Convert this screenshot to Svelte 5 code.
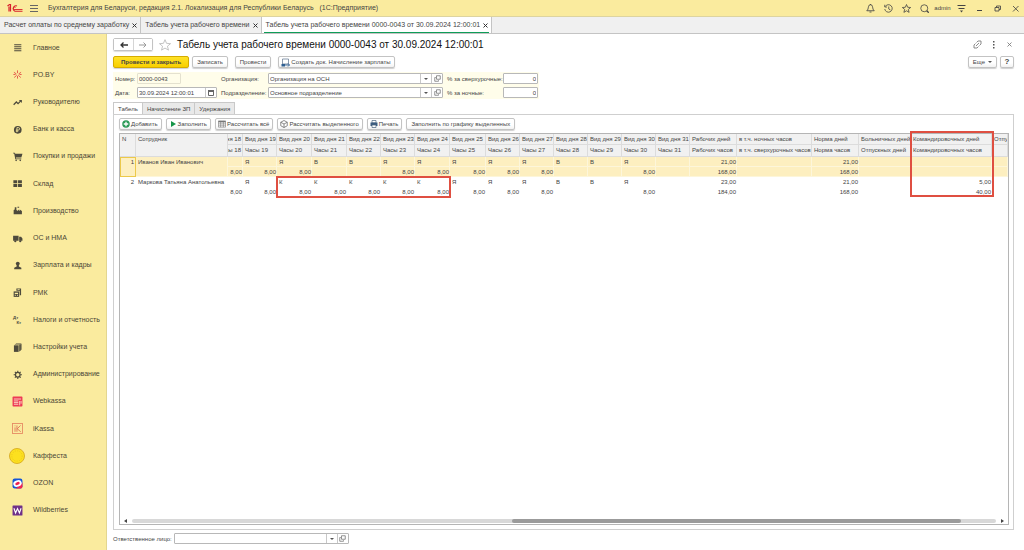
<script>
	const sections = [
		{ name: 'Главное', icon: 'main' },
		{ name: 'PO.BY', icon: 'poby' },
		{ name: 'Руководителю', icon: 'trend' },
		{ name: 'Банк и касса', icon: 'bank' },
		{ name: 'Покупки и продажи', icon: 'cart' },
		{ name: 'Склад', icon: 'stock' },
		{ name: 'Производство', icon: 'factory' },
		{ name: 'ОС и НМА', icon: 'truck' },
		{ name: 'Зарплата и кадры', icon: 'person' },
		{ name: 'РМК', icon: 'rmk' },
		{ name: 'Налоги и отчетность', icon: 'tax' },
		{ name: 'Настройки учета', icon: 'books' },
		{ name: 'Администрирование', icon: 'gear' },
		{ name: 'Webkassa', icon: 'webkassa' },
		{ name: 'iKassa', icon: 'ikassa' },
		{ name: 'Каффеста', icon: 'kaffesta' },
		{ name: 'OZON', icon: 'ozon' },
		{ name: 'Wildberries', icon: 'wb' }
	];

	const windows = [
		'Расчет оплаты по среднему заработку',
		'Табель учета рабочего времени',
		'Табель учета рабочего времени 0000-0043 от 30.09.2024 12:00:01'
	];
	let activeWindow = $state(2);

	const pages = ['Табель', 'Начисление ЗП', 'Удержания'];
	let activePage = $state(0);

	let number = $state('0000-0043');
	let date = $state('30.09.2024 12:00:01');
	let organization = $state('Организация на ОСН');
	let department = $state('Основное подразделение');
	let overtime = $state('0');
	let night = $state('0');
	let responsible = $state('');

	const days = [19, 20, 21, 22, 23, 24, 25, 26, 27, 28, 29, 30, 31];
	const dayWidths = [34, 35, 35, 34, 34, 35, 36, 34, 34, 34, 34, 34, 34];

	const totals = [
		{ top: 'Рабочих дней', bottom: 'Рабочих часов', width: 47 },
		{ top: 'в т.ч. ночных часов', bottom: 'в т.ч. сверхурочных часов', width: 75 },
		{ top: 'Норма дней', bottom: 'Норма часов', width: 47 },
		{ top: 'Больничных дней', bottom: 'Отпускных дней', width: 52 },
		{ top: 'Командировочных дней', bottom: 'Командировочных часов', width: 81 }
	];

	const employees = [
		{
			name: 'Иванов Иван Иванович',
			kinds: ['Я', 'Я', 'В', 'В', 'Я', 'Я', 'Я', 'Я', 'Я', 'В', 'В', 'Я', ''],
			hours: ['8,00', '8,00', '', '', '8,00', '8,00', '8,00', '8,00', '8,00', '', '', '8,00', ''],
			totalDays: ['21,00', '', '21,00', '', ''],
			totalHours: ['168,00', '', '168,00', '', '']
		},
		{
			name: 'Маркова Татьяна Анатольевна',
			kinds: ['Я', 'К', 'К', 'К', 'К', 'К', 'Я', 'Я', 'Я', 'В', 'В', 'Я', ''],
			hours: ['8,00', '8,00', '8,00', '8,00', '8,00', '8,00', '8,00', '8,00', '8,00', '', '', '8,00', ''],
			totalDays: ['23,00', '', '21,00', '', '5,00'],
			totalHours: ['184,00', '', '168,00', '', '40,00']
		}
	];
	let selectedRow = $state(0);
</script>

{#snippet openIcon()}
	<svg width="7" height="7" viewBox="0 0 14 14" fill="none" stroke="#666" stroke-width="1.400">
		<path d="M5 1.500h7.500v7H5z" />
		<path d="M3.500 5H1.500v7.500h7.500v-2" />
	</svg>
{/snippet}

{#snippet combo(label)}
	<button class="field-btn" type="button" aria-label="{label}: выбрать из списка">
		<svg width="4" height="2" viewBox="0 0 4 2"><path d="M0 0h4L2 2z" fill="#555" /></svg>
	</button>
	<button class="field-btn" type="button" aria-label="{label}: открыть">{@render openIcon()}</button>
{/snippet}

{#snippet sectionIcon(icon)}
	<svg class="section-icon" viewBox="0 0 20 20" fill="#4d4a3c">
		{#if icon === 'main'}
			<path d="M4 4h13v1.800H4zM4 7.600h13v1.800H4zM4 11.200h13v1.800H4zM4 14.800h13v1.800H4z" />
		{:else if icon === 'poby'}
			<g stroke="#e0413e" stroke-width="1.500" fill="none">
				<path d="M10 2.500v5M10 12.500v5M3.500 6l4.500 3M16.500 6L12 9M4 15.500l4.500-4M16 15.500l-4.500-4M2.500 10h4M13.500 10h4" />
			</g>
		{:else if icon === 'trend'}
			<path d="M3 14l5-5 3 3 5-5" fill="none" stroke="#4d4a3c" stroke-width="2.200" />
			<path d="M12.500 5.500H18V11z" />
		{:else if icon === 'bank'}
			<circle cx="10.500" cy="10.500" r="7" />
			<path d="M9 15V6.500h2.500a2.200 2.200 0 0 1 0 4.500H7M7 13h4.500" fill="none" stroke="#faeb9e" stroke-width="1.500" />
		{:else if icon === 'cart'}
			<path d="M2 3h3l1 2h13l-2 7H7l.5 1.500H17V15H6L4 4.500H2z" />
			<circle cx="7.500" cy="17" r="1.500" />
			<circle cx="15" cy="17" r="1.500" />
		{:else if icon === 'stock'}
			<path d="M2.500 4h7v5.500h-7zM11 4h7v5.500h-7zM2.500 11h7v5.500h-7zM11 11h7v5.500h-7z" />
		{:else if icon === 'factory'}
			<path d="M3 17V9l2-1V4h3v5l3 2V8l3 3V8l4 3v6zM10 3h3v2h-3z" />
		{:else if icon === 'truck'}
			<path d="M2 5h10v9H2zM13 7h3.500L19 10v4h-6z" />
			<circle cx="6" cy="15" r="2" />
			<circle cx="15" cy="15" r="2" />
		{:else if icon === 'person'}
			<circle cx="10.500" cy="6.500" r="3.500" />
			<path d="M8.500 9h4v3l4.500 2v3H4v-3l4.500-2z" />
		{:else if icon === 'rmk'}
			<path d="M3 8h10v10H3z" />
			<path d="M8 2.500h8.500V15H14V7H8z" />
			<path d="M5 10.500h6v2H5zM5 14h2v2H5zM9 14h2v2H9zM10 4h4v1.500h-4z" fill="#faeb9e" />
		{:else if icon === 'tax'}
			<text x="2" y="9" font-size="8" font-weight="700">Дт</text>
			<text x="8" y="18" font-size="8" font-weight="700">Кт</text>
		{:else if icon === 'books'}
			<path d="M3.500 6h8.500v12H3.500z" />
			<path d="M7 2.500h10V14h-1.200V3.700H7zM5.200 4.200h10v12H14v-11H5.200z" />
			<path d="M12.500 6v12l4.500-4V3.500z" opacity="0.700" />
		{:else if icon === 'gear'}
			<circle cx="10.500" cy="10.500" r="4.200" fill="none" stroke="#4d4a3c" stroke-width="2.200" />
			<path
				d="M10.500 3v3M10.500 15v3M3 10.500h3M15 10.500h3M5.200 5.200l2 2M13.800 13.800l2 2M15.800 5.200l-2 2M7.200 13.800l-2 2"
				stroke="#4d4a3c"
				stroke-width="2"
			/>
		{:else if icon === 'webkassa'}
			<rect x="1" y="1" width="18" height="18" rx="1.500" fill="#ee3a55" />
			<path d="M3.500 5.500h13M3.500 9h8M3.500 12h8M3.500 15h8M14 9v8M16.500 9v5" stroke="#fde3c8" stroke-width="1.600" />
		{:else if icon === 'ikassa'}
			<rect x="1" y="1" width="18" height="18" fill="none" stroke="#e58a62" stroke-width="1.600" />
			<path d="M5.500 8v8M5.500 4.500v1.500M9 4.500V16M15.500 4.500L9.500 10.500L16 16" fill="none" stroke="#dd6b50" stroke-width="1.500" />
		{:else if icon === 'kaffesta'}
			<circle cx="10" cy="10" r="9.400" fill="#fce01f" stroke="#d3a51c" stroke-width="1" />
			<circle cx="10" cy="10" r="6.500" fill="none" stroke="#e8bf1c" stroke-width="0.800" stroke-dasharray="1.500 1.500" />
		{:else if icon === 'ozon'}
			<rect x="1" y="1" width="18" height="18" rx="4" fill="#1456d8" />
			<path d="M19 8v8a3 3 0 0 1-3 3H7z" fill="#f3224f" />
			<ellipse cx="10" cy="10" rx="7.800" ry="5.800" transform="rotate(-20 10 10)" fill="#fff" />
			<ellipse cx="10" cy="10" rx="4.200" ry="2.600" transform="rotate(-20 10 10)" fill="#ef1f4d" />
		{:else if icon === 'wb'}
			<rect x="1" y="1" width="18" height="18" rx="1" fill="#6f3089" />
			<path d="M3.500 6l3 8.500L10 6.500l3.500 8L16.500 6" fill="none" stroke="#fff" stroke-width="2" />
		{/if}
	</svg>
{/snippet}

<div class="app">
	<header class="titlebar">
		<svg class="logo" width="16" height="10" viewBox="0 0 32 20" fill="none" stroke="#d8202c">
			<path d="M1 6l4-3h2v14M4 7v10" stroke-width="2.400" />
			<path d="M20 6a5.500 5.500 0 1 0-4 10.500h15" stroke-width="2.200" />
			<path d="M17 9a2.500 2.500 0 1 0-1 4h15" stroke-width="1.800" />
		</svg>
		<button class="icon-btn burger" type="button" aria-label="Меню">
			<svg width="8" height="8" viewBox="0 0 8 8" stroke="#666"><path d="M0 1.500h8M0 4.500h8M0 7.500h8" /></svg>
		</button>
		<span class="app-title">Бухгалтерия для Беларуси, редакция 2.1. Локализация для Республики Беларусь &nbsp; (1С:Предприятие)</span>
		<div class="system">
			<button class="icon-btn" type="button" aria-label="Уведомления">
				<svg width="9" height="9" viewBox="0 0 18 18" fill="none" stroke="#444" stroke-width="1.700">
					<path d="M1.500 13.500c3-2 2.500-5 3.500-8a4 4 0 0 1 8 0c1 3 .5 6 3.500 8zM7 16h4M9 0v2" />
				</svg>
			</button>
			<button class="icon-btn" type="button" aria-label="История">
				<svg width="9" height="9" viewBox="0 0 18 18" fill="none" stroke="#444" stroke-width="1.600">
					<path d="M2.500 5a7.500 7.500 0 1 1-1 5M1.500 1.500V6H6M9.500 5v5l3.500 2" />
				</svg>
			</button>
			<button class="icon-btn" type="button" aria-label="Избранное">
				<svg width="9" height="9" viewBox="0 0 18 18" fill="none" stroke="#444" stroke-width="1.600">
					<path d="M9 1l2.300 5.500 6 .5-4.600 3.800 1.500 5.900L9 13.600l-5.200 3.100 1.500-5.900L.7 7l6-.5z" />
				</svg>
			</button>
			<button class="icon-btn" type="button" aria-label="Поиск">
				<svg width="9" height="9" viewBox="0 0 18 18" fill="none" stroke="#444" stroke-width="1.600">
					<circle cx="8.500" cy="8.500" r="7" />
					<path d="M13.500 13.500l4 4" stroke-width="2.500" />
				</svg>
			</button>
			<span class="user">admin</span>
			<button class="icon-btn" type="button" aria-label="Настройки">
				<svg width="9" height="9" viewBox="0 0 18 18" fill="#444">
					<path d="M1 2h16v1.800H1zM3 8h12v1.800H3zM6 13h6l-3 4z" />
				</svg>
			</button>
			<button class="icon-btn" type="button" aria-label="Свернуть">
				<svg width="9" height="9" viewBox="0 0 18 18"><path d="M4 13h10" stroke="#444" stroke-width="2" /></svg>
			</button>
			<button class="icon-btn" type="button" aria-label="Развернуть">
				<svg width="9" height="9" viewBox="0 0 18 18" fill="none" stroke="#444" stroke-width="1.700">
					<path d="M4 7h8v7H4zM7 7V4h8v7h-3" />
				</svg>
			</button>
			<button class="icon-btn" type="button" aria-label="Закрыть программу">
				<svg width="9" height="9" viewBox="0 0 18 18"><path d="M4 4l11 11M15 4L4 15" stroke="#444" stroke-width="1.700" /></svg>
			</button>
		</div>
	</header>

	<div class="windows">
		{#each windows as title, i}
			<div class="window-tab" class:active={activeWindow === i}>
				<button class="window-name" type="button" onclick={() => (activeWindow = i)}>{title}</button>
				<button class="window-close" type="button" aria-label="Закрыть {title}">
					<svg width="5" height="5" viewBox="0 0 5 5"><path d="M.5.5l4 4M4.500.5l-4 4" stroke="#333" /></svg>
				</button>
			</div>
		{/each}
	</div>

	<nav class="sections">
		{#each sections as section}
			<a class="section" href="#{section.icon}">
				<span class="icon-slot" class:coin={section.icon === 'kaffesta'}>
					{@render sectionIcon(section.icon)}
				</span>
				{section.name}
			</a>
		{/each}
	</nav>

	<main class="form">
		<div class="form-head">
			<div class="history">
				<button type="button" aria-label="Назад">
					<svg width="8" height="6" viewBox="0 0 8 6" fill="none" stroke="#333" stroke-width="1.300"><path d="M8 3H1M3.500.5L1 3l2.500 2.500" /></svg>
				</button>
				<button type="button" aria-label="Вперед">
					<svg width="8" height="6" viewBox="0 0 8 6" fill="none" stroke="#999"><path d="M0 3h7M4.500.5L7 3 4.500 5.500" /></svg>
				</button>
			</div>
			<button class="icon-btn star" type="button" aria-label="В избранное">
				<svg width="12" height="12" viewBox="0 0 18 18" fill="none" stroke="#b5b5b5" stroke-width="1.200">
					<path d="M9 1l2.300 5.500 6 .5-4.600 3.800 1.500 5.900L9 13.600l-5.200 3.100 1.500-5.900L.7 7l6-.5z" />
				</svg>
			</button>
			<h1>Табель учета рабочего времени 0000-0043 от 30.09.2024 12:00:01</h1>
			<div class="form-tools">
				<button class="icon-btn" type="button" aria-label="Получить ссылку">
					<svg width="9" height="9" viewBox="0 0 18 18" fill="none" stroke="#777" stroke-width="1.700">
						<path d="M7 5l3-3h6v6l-3 3M11 13l-3 3H2v-6l3-3M6 12l6-6" />
					</svg>
				</button>
				<button class="icon-btn" type="button" aria-label="Дополнительно">
					<svg width="9" height="9" viewBox="0 0 18 18" fill="#555"><path d="M8 2h3v3H8zM8 8h3v3H8zM8 14h3v3H8z" /></svg>
				</button>
				<button class="icon-btn" type="button" aria-label="Закрыть форму">
					<svg width="9" height="9" viewBox="0 0 18 18"><path d="M5 5l8 8M13 5l-8 8" stroke="#777" stroke-width="1.700" /></svg>
				</button>
			</div>
		</div>

		<div class="commands">
			<button class="btn primary" type="button">Провести и закрыть</button>
			<button class="btn" type="button">Записать</button>
			<button class="btn spaced" type="button">Провести</button>
			<button class="btn spaced with-icon" type="button">
				<svg width="9" height="9" viewBox="0 0 18 18" fill="none">
					<path d="M3 2h12v10H3z" fill="#fff" stroke="#6d8299" stroke-width="1.600" />
					<path d="M1 12h7v5H1z" fill="#2e5f91" />
					<path d="M8 14h9M14 11l3 3-3 3" stroke="#2e5f91" stroke-width="1.800" />
				</svg>
				Создать док. Начисление зарплаты
			</button>
			<button class="btn more" type="button">
				Еще
				<svg width="4" height="2" viewBox="0 0 4 2"><path d="M0 0h4L2 2z" fill="#555" /></svg>
			</button>
			<button class="btn help" type="button" aria-label="Справка">?</button>
		</div>

		<div class="fields">
			<label for="number">Номер:</label>
			<div class="field number"><input id="number" bind:value={number} /></div>
			<label for="organization">Организация:</label>
			<div class="field">
				<input id="organization" bind:value={organization} />
				{@render combo('Организация')}
			</div>
			<label for="overtime">% за сверхурочные:</label>
			<div class="field amount"><input id="overtime" bind:value={overtime} /></div>

			<label for="date">Дата:</label>
			<div class="field">
				<input id="date" bind:value={date} />
				<button class="field-btn" type="button" aria-label="Календарь">
					<svg width="6" height="6" viewBox="0 0 6 6"><path d="M.5 1h5v4.500h-5z" fill="none" stroke="#666" /><path d="M0 0h6v2H0z" fill="#666" /></svg>
				</button>
			</div>
			<label for="department">Подразделение:</label>
			<div class="field">
				<input id="department" bind:value={department} />
				{@render combo('Подразделение')}
			</div>
			<label for="night">% за ночные:</label>
			<div class="field amount"><input id="night" bind:value={night} /></div>
		</div>

		<div class="pages">
			{#each pages as page, i}
				<button class="page-tab" class:active={activePage === i} type="button" onclick={() => (activePage = i)}>{page}</button>
			{/each}
		</div>

		<section class="page">
			<div class="toolbar">
				<button class="btn with-icon" type="button">
					<svg width="8" height="8" viewBox="0 0 16 16"><circle cx="8" cy="8" r="7.500" fill="#2b9a57" /><path d="M8 3.500v9M3.500 8h9" stroke="#fff" stroke-width="2.600" /></svg>
					Добавить
				</button>
				<button class="btn with-icon" type="button">
					<svg width="8" height="8" viewBox="0 0 8 8"><path d="M2 1l5 3-5 3z" fill="#159447" /></svg>
					Заполнить
				</button>
				<button class="btn with-icon" type="button">
					<svg width="8" height="8" viewBox="0 0 18 18" fill="none" stroke="#777" stroke-width="1.400">
						<path d="M1 2h16v14H1zM1 7h16M1 11.500h16M6 2v14M12 2v14" />
						<path d="M1 3.500h16" stroke-width="2.500" />
					</svg>
					Рассчитать всё
				</button>
				<button class="btn with-icon" type="button">
					<svg width="8" height="8" viewBox="0 0 16 16" fill="none" stroke="#666" stroke-width="1.500">
						<path d="M8 1l6.500 3.500v7L8 15l-6.500-3.500v-7zM1.500 4.500L8 8l6.500-3.500M8 8v7" />
					</svg>
					Рассчитать выделенного
				</button>
				<button class="btn with-icon" type="button">
					<svg width="8" height="8" viewBox="0 0 16 16">
						<path d="M4 1h8v5H4z" fill="#fff" stroke="#4b6480" stroke-width="1.400" />
						<path d="M1 5h14v7H1z" fill="#3c5c80" />
						<path d="M4 10h8v5H4z" fill="#fff" stroke="#4b6480" stroke-width="1.400" />
					</svg>
					Печать
				</button>
				<button class="btn" type="button">Заполнить по графику выделенных</button>
			</div>

			<div class="grid">
				<table>
					<colgroup>
						<col class="col-n" />
						<col class="col-name" />
						<col class="col-cut" />
						{#each dayWidths as width}
							<col style:width="{width}px" />
						{/each}
						{#each totals as total}
							<col style:width="{total.width}px" />
						{/each}
						<col />
					</colgroup>
					<thead>
						<tr>
							<th rowspan="2">N</th>
							<th rowspan="2">Сотрудник</th>
							<th class="cut"><div>Вид дня 18</div></th>
							{#each days as day}
								<th>Вид дня {day}</th>
							{/each}
							{#each totals as total}
								<th>{total.top}</th>
							{/each}
							<th>Отпускных часов</th>
						</tr>
						<tr>
							<th class="cut"><div>Часы 18</div></th>
							{#each days as day}
								<th>Часы {day}</th>
							{/each}
							{#each totals as total}
								<th>{total.bottom}</th>
							{/each}
							<th></th>
						</tr>
					</thead>
					{#each employees as employee, i}
						<tbody class:selected={selectedRow === i} onclick={() => (selectedRow = i)}>
							<tr>
								<td class="num index" rowspan="2">{i + 1}</td>
								<td class="name" rowspan="2">{employee.name}</td>
								<td></td>
								{#each employee.kinds as kind}
									<td>{kind}</td>
								{/each}
								{#each employee.totalDays as value}
									<td class="num">{value}</td>
								{/each}
								<td></td>
							</tr>
							<tr>
								<td class="num">8,00</td>
								{#each employee.hours as value}
									<td class="num">{value}</td>
								{/each}
								{#each employee.totalHours as value}
									<td class="num">{value}</td>
								{/each}
								<td></td>
							</tr>
						</tbody>
					{/each}
				</table>
				<div class="mark mark-days"></div>
				<div class="mark mark-trips"></div>
				<div class="scroll">
					<svg width="3" height="4" viewBox="0 0 3 4"><path d="M3 0v4L0 2z" fill="#444" /></svg>
					<div class="track"><div class="thumb"></div></div>
					<svg width="3" height="4" viewBox="0 0 3 4"><path d="M0 0v4l3-2z" fill="#444" /></svg>
				</div>
			</div>
		</section>

		<div class="footer">
			<label for="responsible">Ответственное лицо:</label>
			<div class="field">
				<input id="responsible" bind:value={responsible} />
				{@render combo('Ответственное лицо')}
			</div>
		</div>
	</main>
</div>

<style>
	:global(body) {
		background: #fff;
	}

	.app {
		display: grid;
		grid-template-columns: 107px minmax(0, 1fr);
		grid-template-rows: 17px 17px minmax(0, 1fr);
		min-height: 100vh;
		font-family: 'Liberation Sans', Arial, sans-serif;
		font-size: 7px;
		line-height: 10px;
		color: #444;
	}

	.app * {
		box-sizing: border-box;
	}

	button,
	input {
		font: inherit;
		color: inherit;
		margin: 0;
		padding: 0;
	}

	button {
		white-space: nowrap;
		cursor: pointer;
	}

	svg {
		display: block;
		flex: none;
	}

	.icon-btn {
		display: flex;
		align-items: center;
		justify-content: center;
		border: 0;
		background: none;
	}

	/* title bar */
	.titlebar {
		grid-column: 1 / -1;
		display: flex;
		align-items: center;
		padding: 0 0 0 7px;
		background: #faeb9e;
		border-bottom: 1px solid #ddd4a0;
	}

	.burger {
		margin: 0 10px 0 7px;
	}

	.app-title {
		white-space: nowrap;
	}

	.system {
		display: flex;
		align-items: center;
		margin-left: auto;
	}

	.system .icon-btn {
		width: 18px;
		height: 14px;
	}

	.user {
		width: 19px;
		font-size: 6px;
		text-align: center;
	}

	/* open windows */
	.windows {
		grid-column: 1 / -1;
		display: flex;
		background: #f0f0f0;
		border-bottom: 1px solid #c4c4c4;
	}

	.window-tab {
		display: flex;
		align-items: center;
		gap: 3px;
		padding: 0 3px 0 4px;
		border-right: 1px solid #c4c4c4;
	}

	.window-tab.active {
		background: linear-gradient(#0f9d58, #0f9d58) 2px 100% / calc(100% - 4px) 1px no-repeat #fff;
	}

	.window-name,
	.window-close {
		border: 0;
		background: none;
	}

	/* sections panel */
	.sections {
		display: flex;
		flex-direction: column;
		padding-bottom: 26px;
		background: #faeb9e;
		border-right: 1px solid #e3d68f;
	}

	.section {
		flex: 1;
		display: flex;
		align-items: center;
		gap: 8px;
		padding-left: 9px;
		color: #4a4636;
		text-decoration: none;
		white-space: nowrap;
	}

	.icon-slot {
		display: flex;
		justify-content: center;
		width: 16px;
	}

	.section-icon {
		width: 11px;
		height: 11px;
	}

	.coin .section-icon {
		width: 16px;
		height: 16px;
	}

	/* form */
	.form {
		display: flex;
		flex-direction: column;
		min-width: 0;
		padding: 4px 10px 6px 6px;
	}

	.form-head {
		display: flex;
		align-items: center;
		height: 13px;
	}

	.history {
		display: flex;
		height: 13px;
		border: 1px solid #c3c3c3;
		border-radius: 2px;
		box-shadow: 0 1px 1px #ddd;
	}

	.history button {
		display: flex;
		align-items: center;
		justify-content: center;
		width: 19px;
		border: 0;
		background: #fff;
	}

	.history button + button {
		border-left: 1px solid #d5d5d5;
	}

	.star {
		margin: 0 6px;
	}

	h1 {
		margin: 0;
		font-size: 10px;
		font-weight: 400;
		line-height: 13px;
		color: #111;
		white-space: nowrap;
	}

	.form-tools {
		display: flex;
		gap: 7px;
		margin-left: auto;
	}

	.btn {
		display: flex;
		align-items: center;
		justify-content: center;
		gap: 1px;
		height: 12px;
		padding: 0 4px;
		border: 1px solid #c3c3c3;
		border-radius: 2px;
		background: linear-gradient(#fff 60%, #f2f2f2);
		box-shadow: 0 1px 1px #d0d0d0;
		font-size: 6px;
	}

	.btn.with-icon {
		padding: 0 3px 0 2px;
	}

	.commands {
		display: flex;
		gap: 3px;
		margin-top: 5px;
	}

	.btn.primary {
		padding: 0 7px;
		border-color: #d5ac00;
		background: linear-gradient(#ffe227, #f8cf00);
		font-weight: 700;
	}

	.btn.spaced {
		margin-left: 4px;
	}

	.btn.more {
		margin-left: auto;
		gap: 3px;
	}

	.btn.help {
		width: 14px;
		font-size: 8px;
		font-weight: 700;
	}

	.fields {
		align-self: flex-start;
		display: grid;
		grid-template-columns: 22px 80px 51px 175px 60px 35px;
		grid-auto-rows: 11px;
		row-gap: 3px;
		align-items: center;
		margin-top: 4px;
		padding: 1px 1px 1px 2px;
		background: #fffdea;
		font-size: 6px;
	}

	.fields label {
		white-space: nowrap;
	}

	.fields label:nth-of-type(3n + 2),
	.fields label:nth-of-type(3n) {
		padding-left: 4px;
	}

	.field {
		display: flex;
		height: 11px;
		border: 1px solid #b8b8b8;
		border-radius: 1px;
		background: #fff;
	}

	.field input {
		flex: 1;
		min-width: 0;
		width: 100%;
		padding: 0 1px;
		border: 0;
		background: none;
		outline: none;
	}

	.field.number {
		width: 44px;
		border-color: #e4e1cf;
		background: none;
	}

	.field.amount input {
		text-align: right;
	}

	.field-btn {
		display: flex;
		align-items: center;
		justify-content: center;
		width: 11px;
		border: 0;
		border-left: 1px solid #c8c8c8;
		background: none;
	}

	/* form pages */
	.pages {
		display: flex;
		margin-top: 3px;
	}

	.page-tab {
		height: 12px;
		padding: 0 4px;
		border: 1px solid #c9c9c9;
		border-left-width: 0;
		border-bottom-width: 0;
		background: #e9e9e9;
		font-size: 6px;
	}

	.page-tab:first-child {
		border-left-width: 1px;
	}

	.page-tab.active {
		background: #fff;
	}

	.page {
		flex: 1;
		display: flex;
		flex-direction: column;
		gap: 3px;
		padding: 3px 4px 4px 5px;
		border: 1px solid #cfcfcf;
	}

	.toolbar {
		display: flex;
		gap: 4px;
	}

	/* timesheet */
	.grid {
		position: relative;
		flex: 1;
		display: flex;
		flex-direction: column;
		border: 1px solid #b5b5b5;
	}

	table {
		width: 100%;
		table-layout: fixed;
		border-collapse: separate;
		border-spacing: 0;
		font-size: 6px;
		line-height: 10px;
	}

	.col-n {
		width: 16px;
	}

	.col-name {
		width: 92px;
	}

	.col-cut {
		width: 15px;
	}

	th,
	td {
		height: 10px;
		padding: 0 1px 0 2px;
		overflow: hidden;
		white-space: nowrap;
		text-align: left;
		vertical-align: top;
		font-weight: 400;
	}

	th {
		height: 11px;
		border-right: 1px solid #dcdcdc;
		border-bottom: 1px solid #dcdcdc;
		background: #f1f1f1;
	}

	thead tr:last-child th {
		height: 12px;
	}

	.cut div {
		display: flex;
		justify-content: flex-end;
	}

	td.num {
		padding-left: 0;
		text-align: right;
	}

	td.index {
		padding-right: 2px;
	}

	.selected td {
		background: #fdefc0;
		box-shadow: inset -1px -1px #fdf6da;
	}

	.selected td.index {
		box-shadow: inset 0 0 0 1px #ecc94b;
	}

	.mark {
		position: absolute;
		border: 2px solid #df4f41;
		pointer-events: none;
	}

	.mark-days {
		top: 42px;
		left: 156px;
		width: 175px;
		height: 22px;
	}

	.mark-trips {
		top: -3px;
		left: 790px;
		width: 84px;
		height: 66px;
	}

	.scroll {
		display: flex;
		align-items: center;
		gap: 5px;
		margin-top: auto;
		padding: 0 4px 1px;
	}

	.track {
		flex: 1;
		height: 4px;
		border-radius: 2px;
		background: #d8d8d8;
	}

	.thumb {
		width: 52%;
		height: 4px;
		margin-left: 44%;
		border-radius: 2px;
		background: #9b9b9b;
	}

	.footer {
		display: flex;
		align-items: center;
		gap: 2px;
		margin-top: 3px;
		font-size: 6px;
	}

	.footer .field {
		width: 175px;
	}
</style>
